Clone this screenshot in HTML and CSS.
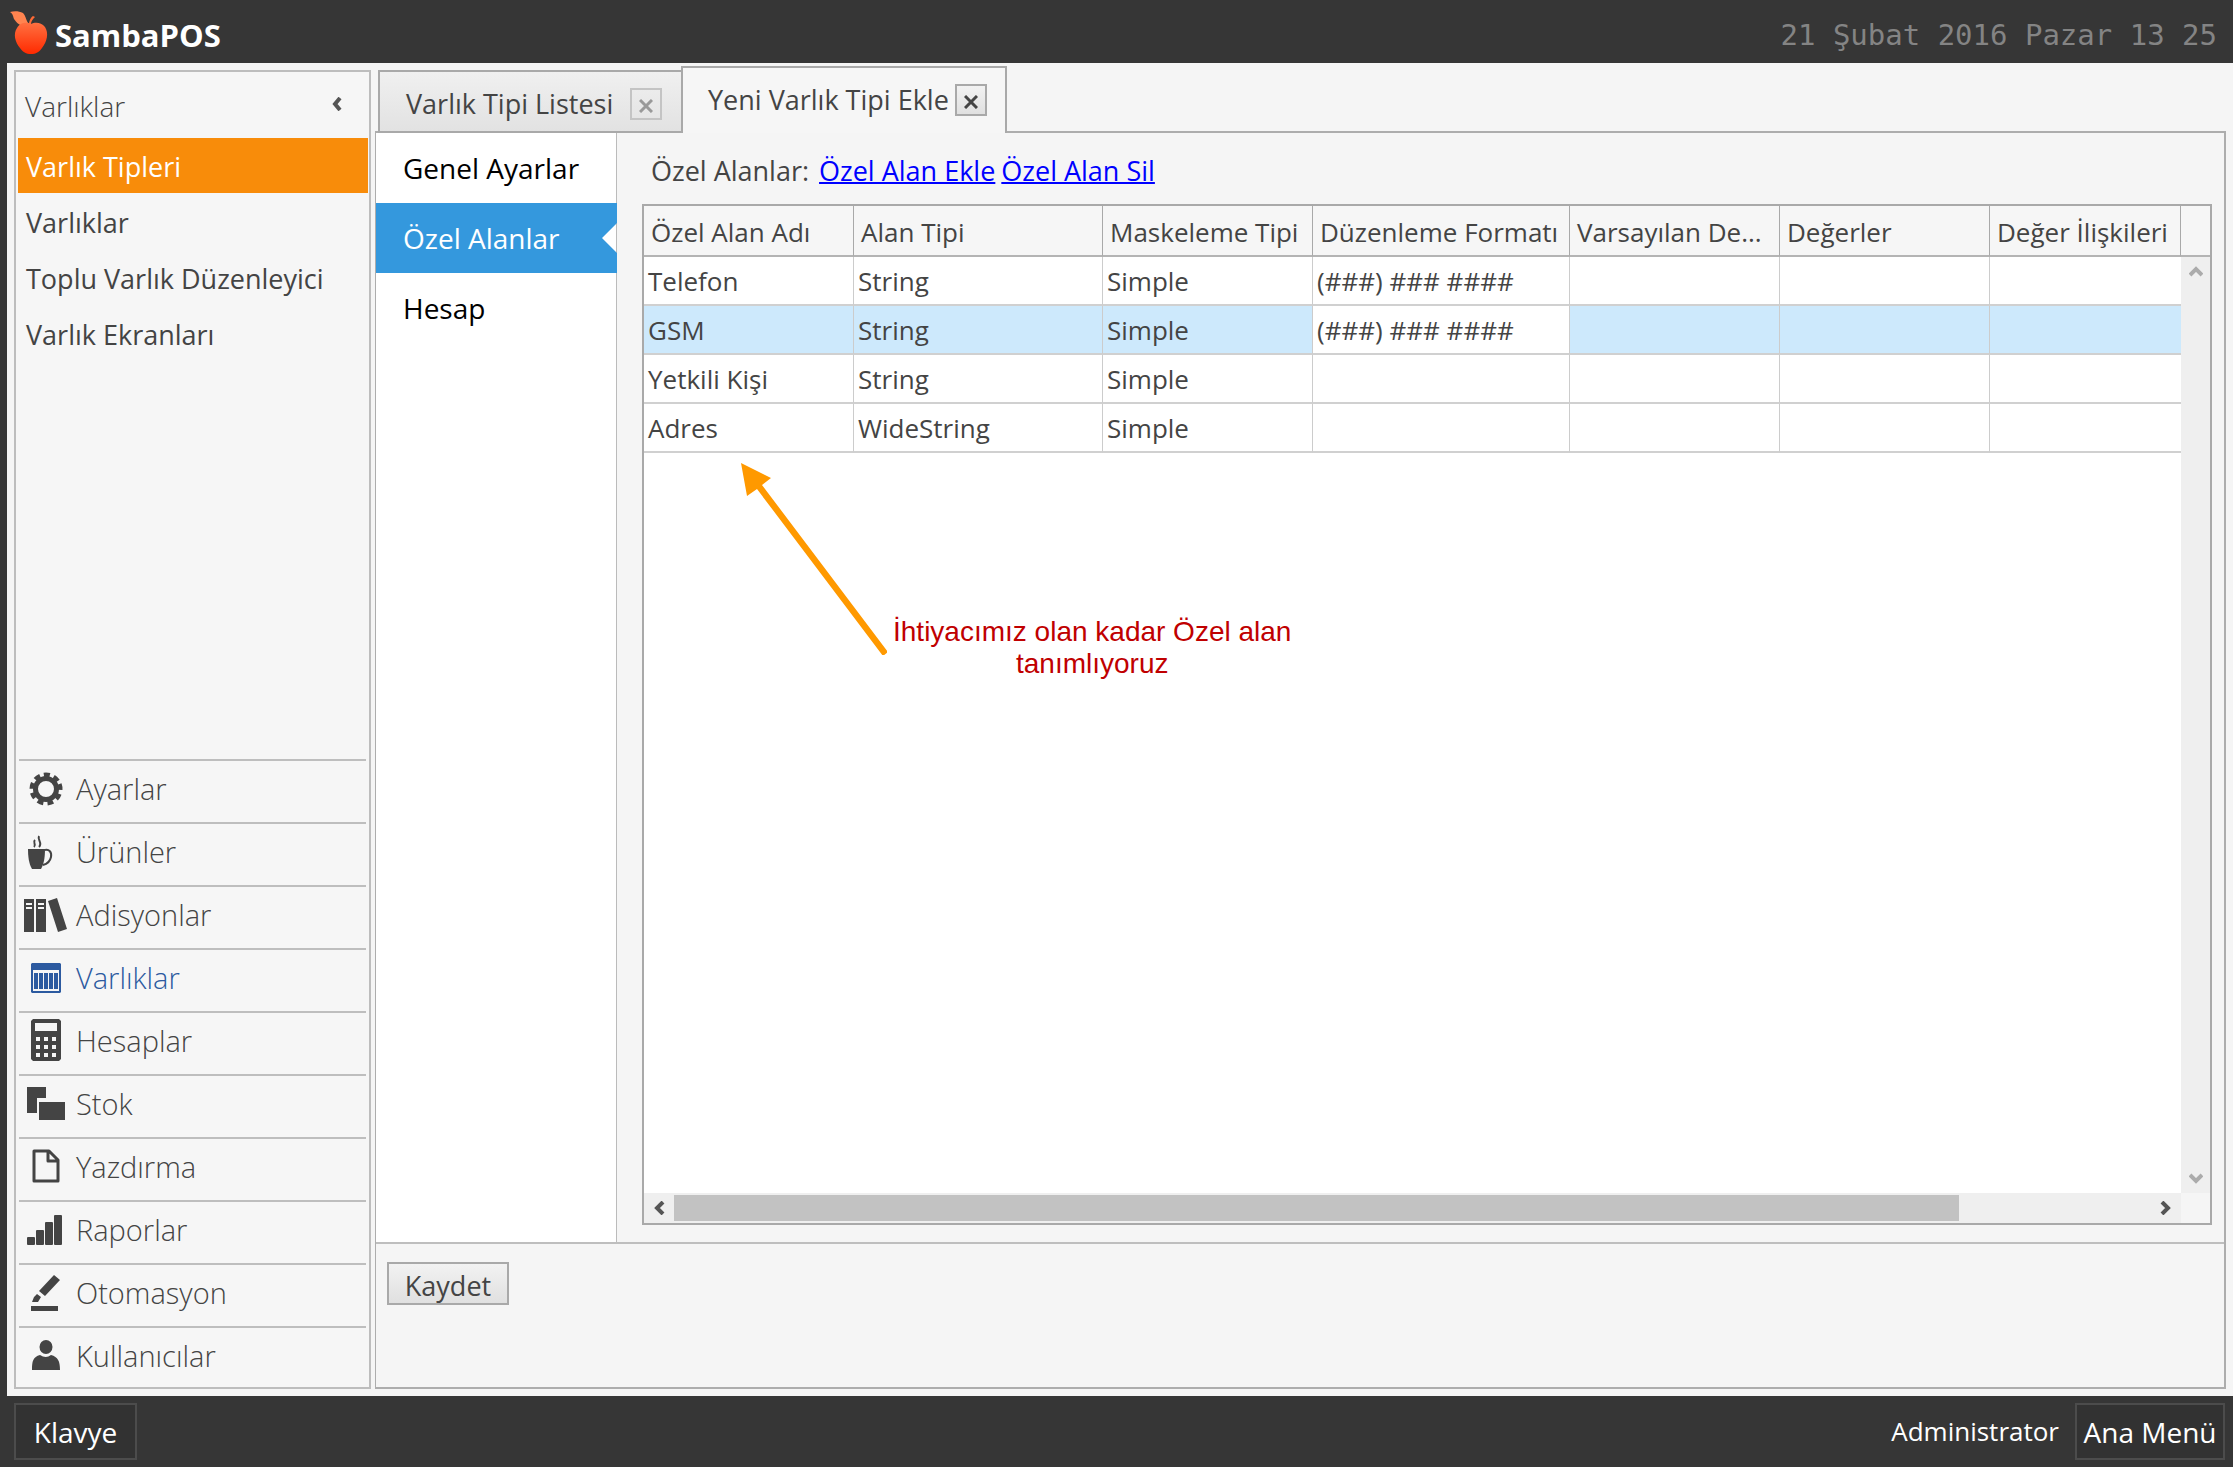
FILE: index.html
```html
<!DOCTYPE html>
<html lang="tr">
<head>
<meta charset="utf-8">
<title>SambaPOS</title>
<link rel="stylesheet" href="styles.css">
</head>
<body>
<header class="topbar">
  <div class="brand">
    <svg class="logo" width="40" height="56" viewBox="0 0 40 56" aria-hidden="true">
      <defs>
        <linearGradient id="apple" x1="0" y1="0" x2="0" y2="1"><stop offset="0" stop-color="#ff7040"/><stop offset="1" stop-color="#ff2a00"/></linearGradient>
      </defs>
      <path d="M1 8 C5 7 10 7 14 9 C17 12 17 17 20 20 C17 20 15 21 13 22 C9 20 7 18 5 15 C4 12 4 10 1 8Z" fill="#ff8450"/>
      <path d="M20 20 C20 17 22 13 24 12 L26 13 C24 15 22 17 22 20Z" fill="#ff6a35"/>
      <path d="M12 20 C16 18 19 19 22 20 C26 18 32 18 36 23 C40 29 38 38 33 44 C30 48 27 50 22 50 C17 50 14 48 11 44 C6 38 4 30 8 24 C9 22 10 21 12 20Z" fill="url(#apple)"/>
    </svg>
    <span class="brand-name">SambaPOS</span>
  </div>
  <time class="clock" datetime="2016-02-21T13:25">21 Şubat 2016 Pazar 13 25</time>
</header>

<div class="workspace">
  <aside class="sidebar">
    <div class="side-head">
      <h1 class="side-title">Varlıklar</h1>
      <button class="collapse" type="button" aria-label="Daralt">
        <svg width="12" height="14" viewBox="0 0 12 14"><path d="M9 1 L4 7 L9 13" fill="none" stroke="#555" stroke-width="4"/></svg>
      </button>
    </div>
    <nav class="side-links">
      <a class="side-link is-active" href="#">Varlık Tipleri</a>
      <a class="side-link" href="#">Varlıklar</a>
      <a class="side-link" href="#">Toplu Varlık Düzenleyici</a>
      <a class="side-link" href="#">Varlık Ekranları</a>
    </nav>
    <nav class="modules">
      <a class="module" href="#"><svg class="icon" viewBox="0 0 46 44"><g fill="none" stroke="currentColor"><circle cx="23" cy="22" r="10.5" stroke-width="5"/><circle cx="23" cy="22" r="14" stroke-width="5" stroke-dasharray="5.77 4" transform="rotate(-20 23 22)"/></g></svg>Ayarlar</a>
      <a class="module" href="#"><svg class="icon" viewBox="0 0 46 44"><path d="M5 19h17c0 8-1 15-4 20h-9c-3-5-4-12-4-20z" fill="currentColor"/><path d="M22 20c4-1 7 2 6 7c-1 5-4 7-8 8M11 17c3-3-2-4 1-7M16 17c4-4-2-7 0-11" fill="none" stroke="currentColor" stroke-width="2"/></svg>Ürünler</a>
      <a class="module" href="#"><svg class="icon" viewBox="0 0 46 44"><path d="M1 6h10v33H1zM13 6h10v33H13zM25 8l9-3 10 31-9 3z" fill="currentColor"/><path d="M3 11h6M3 15h6M15 11h6M15 15h6" stroke="#f6f6f6" stroke-width="2"/></svg>Adisyonlar</a>
      <a class="module is-current" href="#"><svg class="icon" viewBox="0 0 46 44"><path d="M9 7h28l1 1v28l-1 1H9l-1-1V8zM10 14v21h26V14z" fill="currentColor" fill-rule="evenodd"/><path d="M11 17h4v16h-4zM16 17h4v16h-4zM21 17h4v16h-4zM26 17h4v16h-4zM31 17h4v16h-4z" fill="currentColor"/></svg>Varlıklar</a>
      <a class="module" href="#"><svg class="icon" viewBox="0 0 46 44"><path d="M10 0h26l2 2v38l-2 2H10l-2-2V2zM12 4v8h22V4zM13 18v4h4v-4zM21 18v4h4v-4zM29 18v4h4v-4zM13 26v4h4v-4zM21 26v4h4v-4zM29 26v4h4v-4zM13 34v4h4v-4zM21 34v4h4v-4zM29 34v4h4v-4z" fill="currentColor" fill-rule="evenodd"/></svg>Hesaplar</a>
      <a class="module" href="#"><svg class="icon" viewBox="0 0 46 44"><path d="M4 5h19v11h-9v15H4zM16 20h26v18H16z" fill="currentColor"/></svg>Stok</a>
      <a class="module" href="#"><svg class="icon" viewBox="0 0 46 44"><path d="M11 6h15l9 9v21H11zM25 6v10h10" fill="none" stroke="currentColor" stroke-width="3" stroke-linejoin="round"/></svg>Yazdırma</a>
      <a class="module" href="#"><svg class="icon" viewBox="0 0 46 44" fill="currentColor"><rect x="4" y="29" width="8" height="8" rx="1"/><rect x="13" y="22" width="8" height="15" rx="1"/><rect x="22" y="14" width="8" height="23" rx="1"/><rect x="31" y="7" width="8" height="30" rx="1"/></svg>Raporlar</a>
      <a class="module" href="#"><svg class="icon" viewBox="0 0 46 44"><path d="M31 4l6 5-15 16-6-5zM14 23l4 3-3 5-6 0 2-5zM8 35h27v5H8z" fill="currentColor"/></svg>Otomasyon</a>
      <a class="module" href="#"><svg class="icon" viewBox="0 0 46 44"><ellipse cx="23" cy="13" rx="6.500" ry="7" fill="currentColor"/><path d="M9 36c0-9 1-13 8-15q6 4 11 0c7 2 9 6 9 15z" fill="currentColor"/></svg>Kullanıcılar</a>
    </nav>
  </aside>

  <main class="editor">
    <div class="tabs">
      <div class="tab"><span>Varlık Tipi Listesi</span><button class="tab-close" type="button" aria-label="Kapat"><svg width="14" height="14" viewBox="0 0 14 14"><path d="M1 1 L13 13 M13 1 L1 13" stroke="currentColor" stroke-width="3"/></svg></button></div>
      <div class="tab is-open"><span>Yeni Varlık Tipi Ekle</span><button class="tab-close" type="button" aria-label="Kapat"><svg width="14" height="14" viewBox="0 0 14 14"><path d="M1 1 L13 13 M13 1 L1 13" stroke="currentColor" stroke-width="3"/></svg></button></div>
    </div>
    <div class="panel">
      <div class="panel-body">
        <nav class="sections">
          <a class="section" href="#">Genel Ayarlar</a>
          <a class="section is-selected" href="#">Özel Alanlar</a>
          <a class="section" href="#">Hesap</a>
        </nav>
        <section class="fields">
          <div class="field-actions"><span class="field-label">Özel Alanlar:</span><a href="#">Özel Alan Ekle</a><a href="#">Özel Alan Sil</a></div>
          <div class="grid">
            <div class="grid-view">
              <table class="grid-table">
                <colgroup><col class="c-std"><col class="c-type"><col class="c-std"><col class="c-format"><col class="c-std"><col class="c-std"><col></colgroup>
                <thead><tr><th>Özel Alan Adı</th><th>Alan Tipi</th><th>Maskeleme Tipi</th><th>Düzenleme Formatı</th><th>Varsayılan De...</th><th>Değerler</th><th>Değer İlişkileri</th></tr></thead>
                <tbody>
                  <tr><td>Telefon</td><td>String</td><td>Simple</td><td>(###) ### ####</td><td></td><td></td><td></td></tr>
                  <tr class="is-picked"><td>GSM</td><td>String</td><td>Simple</td><td class="is-editing">(###) ### ####</td><td></td><td></td><td></td></tr>
                  <tr><td>Yetkili Kişi</td><td>String</td><td>Simple</td><td></td><td></td><td></td><td></td></tr>
                  <tr><td>Adres</td><td>WideString</td><td>Simple</td><td></td><td></td><td></td><td></td></tr>
                </tbody>
              </table>
              <div class="note">
                <svg class="note-arrow" width="146" height="192" viewBox="0 0 146 192" aria-hidden="true"><path d="M0 0 L30 15 L21 22 L147 189 L142 193 L16 26 L6 33Z" fill="#ff9900"/></svg>
                <p class="note-text">İhtiyacımız olan kadar Özel alan<br>tanımlıyoruz</p>
              </div>
            </div>
            <div class="vbar">
              <div class="vbar-head"></div>
              <div class="vbar-track">
                <svg width="14" height="12" viewBox="0 0 14 12"><path d="M1 10 L7 4 L13 10" fill="none" stroke="#ababab" stroke-width="4"/></svg>
                <svg width="14" height="12" viewBox="0 0 14 12"><path d="M1 2 L7 8 L13 2" fill="none" stroke="#ababab" stroke-width="4"/></svg>
              </div>
            </div>
            <div class="hbar">
              <svg width="12" height="14" viewBox="0 0 12 14"><path d="M9 1 L3 7 L9 13" fill="none" stroke="#555" stroke-width="4"/></svg>
              <div class="hbar-track"><div class="hbar-thumb"></div></div>
              <svg width="12" height="14" viewBox="0 0 12 14"><path d="M3 1 L9 7 L3 13" fill="none" stroke="#555" stroke-width="4"/></svg>
            </div>
          </div>
        </section>
      </div>
      <div class="panel-foot"><button class="save" type="button">Kaydet</button></div>
    </div>
  </main>
</div>

<footer class="bottombar">
  <button class="dark-btn keyboard" type="button">Klavye</button>
  <span class="user">Administrator</span>
  <button class="dark-btn home" type="button">Ana Menü</button>
</footer>
</body>
</html>
```
FILE: styles.css
```css
* { box-sizing: border-box; }
body {
  margin: 0;
  min-height: 100vh;
  display: flex;
  flex-direction: column;
  background: #363636;
  color: #444;
  font-family: "Open Sans", "Noto Sans", sans-serif;
  font-size: 26px;
  line-height: 36px;
}
button { font: inherit; color: inherit; margin: 0; padding: 0; }
svg { display: block; flex: none; }

.topbar { height: 63px; display: flex; align-items: center; justify-content: space-between; padding: 0 16px 0 9px; }
.brand { display: flex; align-items: center; gap: 6px; }
.brand-name { color: #fff; font-size: 31px; font-weight: 700; padding-top: 6px; }
.clock { color: #848484; font-family: "DejaVu Sans Mono", monospace; font-size: 29px; padding-top: 6px; }

.workspace { flex: 1; display: flex; gap: 4px; margin-left: 7px; padding: 0 7px 7px; background: #f5f5f5; }
.sidebar { width: 357px; flex: none; margin-top: 7px; border: 2px solid #bdbdbd; display: flex; flex-direction: column; background: #f6f6f6; }
.side-head { height: 66px; display: flex; align-items: center; justify-content: space-between; padding: 2px 26px 0 9px; }
.side-title { margin: 0; font-size: 28px; font-weight: 300; }
.collapse { border: 0; background: none; padding-bottom: 4px; }
.side-links { display: flex; flex-direction: column; gap: 1px; padding: 0 1px 0 2px; }
.side-link { height: 55px; line-height: 58px; padding-left: 8px; color: #444; font-size: 27px; text-decoration: none; }
.side-link.is-active { background: #f88c0a; color: #fff; }
.modules { margin-top: auto; padding: 0 3px; }
.module { height: 63px; border-top: 2px solid #bebebe; display: flex; align-items: center; gap: 7px; padding: 0 0 6px 4px; color: #444; font-size: 29px; font-weight: 300; text-decoration: none; }
.module:last-child { height: 61px; padding-bottom: 4px; }
.module.is-current { color: #2c5aa0; }
.icon { width: 46px; height: 44px; }

.editor { flex: 1; min-width: 0; display: flex; flex-direction: column; padding-top: 3px; }
.tabs { display: flex; align-items: flex-end; padding-left: 3px; margin-bottom: -2px; position: relative; font-size: 27px; }
.tab { height: 63px; border: 2px solid #a9a9a9; border-right: 0; background: linear-gradient(#f0f0f0, #e2e2e2); display: flex; align-items: center; justify-content: space-between; width: 303px; padding: 4px 19px 0 26px; }
.tab.is-open { height: 67px; width: 326px; border-right: 2px solid #a9a9a9; border-bottom: 0; background: #f6f6f6; padding: 0 18px 1px 25px; }
.tab-close { width: 32px; height: 32px; border: 2px solid #c4c4c4; background: none; color: #999; display: flex; align-items: center; justify-content: center; padding-top: 4px; }
.is-open .tab-close { border-color: #a9a9a9; background: linear-gradient(#f2f2f2, #e0e0e0); color: #444; }
.panel { flex: 1; display: flex; flex-direction: column; border: 2px solid #adadad; border-left-width: 1px; }
.panel-body { flex: 1; display: flex; }
.sections { width: 241px; flex: none; background: #fff; border-right: 1px solid #bbb; }
.section { display: block; height: 70px; line-height: 70px; padding-left: 27px; color: #000; font-size: 28px; text-decoration: none; }
.section.is-selected { background: #3498dd; color: #fff; margin-right: -1px; clip-path: polygon(0 0, 100% 0, 100% 20px, calc(100% - 15px) 50%, 100% 50px, 100% 100%, 0 100%); }
.panel-foot { height: 145px; border-top: 2px solid #bebebe; padding: 18px 11px; }
.save { height: 43px; width: 122px; border: 2px solid #a9a9a9; background: linear-gradient(#f2f2f2, #e0e0e0); font-size: 27px; line-height: 40px; padding-top: 2px; }

.fields { flex: 1; min-width: 0; display: flex; flex-direction: column; padding: 0 12px 17px 25px; }
.field-actions { height: 71px; display: flex; align-items: center; gap: 6px; padding: 5px 0 0 9px; font-size: 27px; }
.field-label { margin-right: 4px; }
.field-actions a { color: #00f; text-decoration-thickness: 2px; }

.grid { flex: 1; display: grid; grid-template-columns: minmax(0, 1fr) 29px; grid-template-rows: 1fr 30px; border: 2px solid #a9a9a9; }
.grid-view { background: #fff; position: relative; overflow: hidden; }
.grid-table { width: 100%; table-layout: fixed; border-collapse: separate; border-spacing: 0; }
.c-std { width: 210px; }
.c-type { width: 249px; }
.c-format { width: 257px; }
.grid-table th { height: 51px; padding: 3px 0 0 7px; text-align: left; font-weight: 400; white-space: nowrap; background: #f6f6f6; border-right: 1px solid #a9a9a9; border-bottom: 2px solid #b4b4b4; }
.grid-table td { height: 49px; padding: 1px 0 0 4px; border-right: 1px solid #ccc; border-bottom: 2px solid #d0d0d0; }
.grid-table td:last-child { border-right: 0; }
.is-picked td { background: #cde9fc; }
.is-picked .is-editing { background: #fff; }
.vbar { display: flex; flex-direction: column; }
.vbar-head { height: 51px; background: #f6f6f6; border-bottom: 2px solid #b4b4b4; }
.vbar-track { flex: 1; background: #efefef; display: flex; flex-direction: column; align-items: center; justify-content: space-between; padding: 8px 0; }
.hbar { background: #efefef; display: flex; align-items: center; gap: 8px; padding: 0 10px; }
.hbar-track { flex: 1; }
.hbar-thumb { width: 87%; height: 26px; background: #c2c2c2; }

.note { position: absolute; left: 97px; top: 257px; display: flex; align-items: flex-end; gap: 6px; }
.note-text { margin: 0 0 -25px; color: #c00000; font-family: "Liberation Sans", Arial, sans-serif; font-size: 28px; line-height: 32px; text-align: center; white-space: nowrap; }

.bottombar { height: 71px; display: flex; align-items: center; padding: 0 8px 0 14px; color: #fff; }
.dark-btn { height: 57px; border: 2px solid #4c4c4c; background: #323232; font-size: 28px; }
.keyboard { width: 123px; }
.home { width: 150px; }
.user { margin: 0 16px 2px auto; }
```
